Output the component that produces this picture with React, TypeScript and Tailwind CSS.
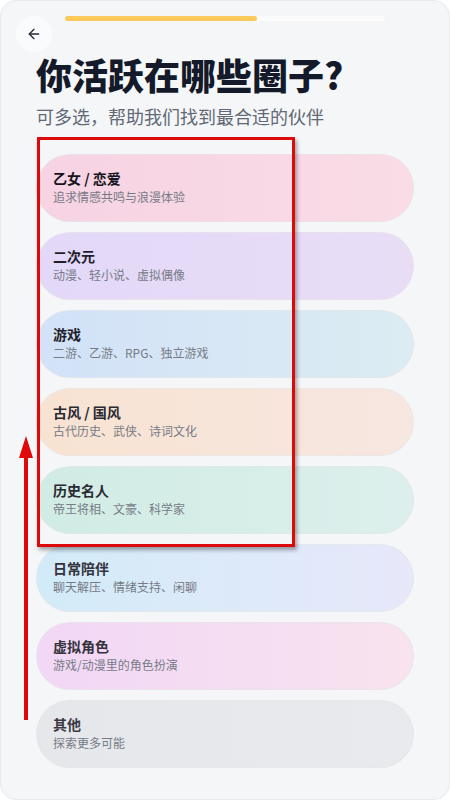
import React from "react";
import { ArrowLeft } from "lucide-react";

const circles = [
  { title: "乙女 / 恋爱", desc: "追求情感共鸣与浪漫体验", bg: "bg-gradient-to-r from-[#f7d3e3] to-[#f9dce6]", tone: "text-[#161622]" },
  { title: "二次元", desc: "动漫、轻小说、虚拟偶像", bg: "bg-gradient-to-r from-[#e3d8f8] to-[#e9ddf6]", tone: "text-[#1f1f2b]" },
  { title: "游戏", desc: "二游、乙游、RPG、独立游戏", bg: "bg-gradient-to-r from-[#d2e2f8] to-[#dcecf2]", tone: "text-[#1f1f2b]" },
  { title: "古风 / 国风", desc: "古代历史、武侠、诗词文化", bg: "bg-gradient-to-r from-[#f8e3d2] to-[#f7e7e1]", tone: "text-[#2a2a33]" },
  { title: "历史名人", desc: "帝王将相、文豪、科学家", bg: "bg-gradient-to-r from-[#d1ece4] to-[#dcefec]", tone: "text-[#2a2a33]" },
  { title: "日常陪伴", desc: "聊天解压、情绪支持、闲聊", bg: "bg-gradient-to-r from-[#d2ebf8] to-[#e7e8fa]", tone: "text-[#33333d]" },
  { title: "虚拟角色", desc: "游戏/动漫里的角色扮演", bg: "bg-gradient-to-r from-[#f2d7f6] to-[#f8e3ee]", tone: "text-[#33333d]" },
  { title: "其他", desc: "探索更多可能", bg: "bg-gradient-to-r from-[#e5e7eb] to-[#e8eaed]", tone: "text-[#3a3a44]" },
];

export default function App() {
  return (
    <div className="min-h-screen bg-white" style={{ fontFamily: '"Noto Sans CJK SC", "Noto Sans", sans-serif' }}>
      <div className="relative h-[800px] rounded-2xl border border-[#e9ebee] bg-[#f5f6f8] overflow-hidden">
        <header className="flex items-start pl-[15px] pt-[15px]">
          <button className="flex h-9 w-9 items-center justify-center rounded-full bg-[#fafbfc] text-[#1f2937]">
            <ArrowLeft size={16} strokeWidth={2} />
          </button>
          <div className="ml-[13px] h-[5px] w-[320px] rounded-full bg-[#fbfbfc]">
            <div className="h-full w-[60%] rounded-full bg-[#fcc95b]" />
          </div>
        </header>

        <div className="px-[35px]">
          <h1 className="mt-[0px] text-[36px] leading-[44px] font-black text-[#141a2a]">你活跃在哪些圈子?</h1>
          <p className="mt-[7px] text-[18px] leading-[26px] text-[#626874]">可多选，帮助我们找到最合适的伙伴</p>

          <div className="mt-[25px] flex flex-col gap-[10px]">
            {circles.map((c) => (
              <div key={c.title} className={`${c.bg} flex h-[68px] flex-col justify-center rounded-full border border-[#e4e6ea]/60 pl-4 pb-[3px]`}>
                <span className={`${c.tone} text-[14px] leading-[20px] font-bold`}>{c.title}</span>
                <span className="text-[12px] leading-[17px] text-[#767b86]">{c.desc}</span>
              </div>
            ))}
          </div>
        </div>

        <div className="absolute left-[36px] top-[136px] h-[410px] w-[258px] border-[3px] border-[#dc0a0a] shadow-[2px_3px_4px_rgba(0,0,0,0.35)]" />

        <svg className="absolute left-[16px] top-[435px]" width="18" height="286" viewBox="0 0 18 286">
          <path d="M9 0 L16 22 L11 22 L11 284 L7 284 L7 22 L2 22 Z" fill="#e00808" />
        </svg>
      </div>
    </div>
  );
}
